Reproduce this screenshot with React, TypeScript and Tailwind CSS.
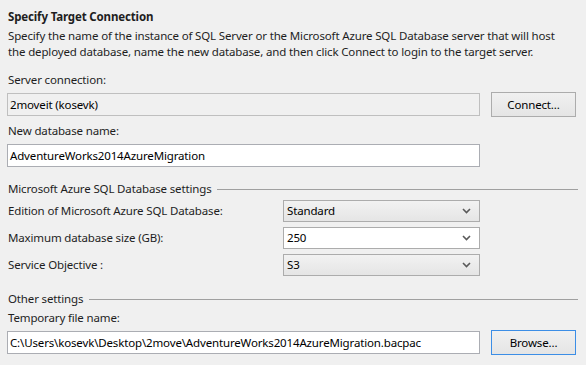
import React from "react";

const font = { fontFamily: '"Noto Sans", "Open Sans", Arial, sans-serif' };

const Chevron: React.FC = () => (
  <svg width="9" height="6" viewBox="0 0 9 6" className="shrink-0">
    <path d="M1 1 L4.5 4.5 L8 1" fill="none" stroke="#5a5a5a" strokeWidth="1.6" />
  </svg>
);

const Combo: React.FC<{ value: string; editable?: boolean }> = ({ value, editable }) => (
  <div
    className={
      "w-[197px] h-[22px] border border-[#acacac] flex items-center justify-between pl-[3px] pr-[8px] " +
      (editable ? "bg-white" : "bg-gradient-to-b from-[#f2f2f2] to-[#e5e5e5]")
    }
  >
    <span className="text-[11.5px] tracking-[-0.15px] text-black leading-none">{value}</span>
    <Chevron />
  </div>
);

const TextBox: React.FC<{ value: string; disabled?: boolean }> = ({ value, disabled }) => (
  <div
    className={
      "w-[473px] h-[23px] border flex items-center px-[2px] " +
      (disabled ? "bg-[#f0f0f0] border-[#bfbfbf]" : "bg-white border-[#abadb3]")
    }
  >
    <span className="text-[11.5px] tracking-[-0.15px] text-black leading-none whitespace-nowrap">{value}</span>
  </div>
);

const Button: React.FC<{ label: string; focused?: boolean }> = ({ label, focused }) => (
  <button
    className={
      "w-[85px] h-[25px] border bg-gradient-to-b from-[#f0f0f0] to-[#e5e5e5] text-[11.5px] tracking-[-0.15px] text-black " +
      (focused ? "border-[#3c8ee6]" : "border-[#acacac]")
    }
  >
    {label}
  </button>
);

const GroupHeading: React.FC<{ label: string }> = ({ label }) => (
  <div className="h-[16px] flex items-center gap-[6px]">
    <span className="text-[11.5px] tracking-[-0.15px] text-[#1e1e1e] leading-[16px] whitespace-nowrap">{label}</span>
    <div className="flex-1 h-px bg-[#a0a0a0] mr-[-2px]" />
  </div>
);

const FieldRow: React.FC<{ label: string; children: React.ReactNode }> = ({ label, children }) => (
  <div className="flex items-center h-[22px]">
    <span className="w-[275px] text-[11.5px] tracking-[-0.15px] text-[#1e1e1e] leading-[16px]">{label}</span>
    {children}
  </div>
);

const label = "pl-[1px] text-[11.5px] tracking-[-0.15px] text-[#1e1e1e] leading-[16px] whitespace-nowrap";

export default function App() {
  return (
    <div className="w-[586px] h-[365px] bg-[#f0f0f0] overflow-hidden pl-[7px] pr-[10px] pt-[8px]" style={font}>
      <div className="pl-[1px] text-[11.5px] tracking-[-0.15px] font-bold text-[#1e1e1e] leading-[18px]">
        Specify Target Connection
      </div>
      <p className={label + " mt-[2px]"}>
        Specify the name of the instance of SQL Server or the Microsoft Azure SQL Database server that will host
        <br />
        the deployed database, name the new database, and then click Connect to login to the target server.
      </p>

      <div className={label + " mt-[12px]"}>Server connection:</div>
      <div className="mt-[4px] flex items-center justify-between h-[25px]">
        <TextBox value="2moveit (kosevk)" disabled />
        <Button label="Connect..." />
      </div>

      <div className={label + " mt-[6px]"}>New database name:</div>
      <div className="mt-[5px]">
        <TextBox value="AdventureWorks2014AzureMigration" />
      </div>

      <div className="pl-[1px] mt-[14px]">
        <GroupHeading label="Microsoft Azure SQL Database settings" />
      </div>
      <div className="pl-[1px] mt-[3px] flex flex-col gap-[5px]">
        <FieldRow label="Edition of Microsoft Azure SQL Database:">
          <Combo value="Standard" />
        </FieldRow>
        <FieldRow label="Maximum database size (GB):">
          <Combo value="250" editable />
        </FieldRow>
        <FieldRow label="Service Objective :">
          <Combo value="S3" />
        </FieldRow>
      </div>

      <div className="pl-[1px] mt-[15px]">
        <GroupHeading label="Other settings" />
      </div>
      <div className={label + " mt-[3px]"}>Temporary file name:</div>
      <div className="mt-[4px] flex items-center justify-between h-[25px]">
        <TextBox value="C:\Users\kosevk\Desktop\2move\AdventureWorks2014AzureMigration.bacpac" />
        <Button label="Browse..." focused />
      </div>
    </div>
  );
}
